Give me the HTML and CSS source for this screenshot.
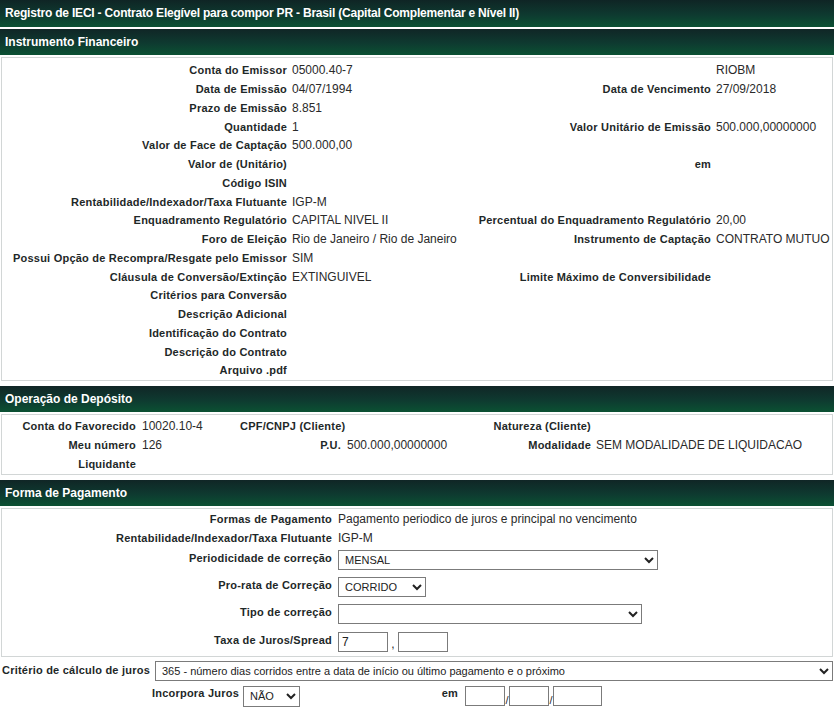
FILE: index.html
```html
<!DOCTYPE html>
<html lang="pt-BR">
<head>
<meta charset="utf-8">
<title>Registro de IECI</title>
<link rel="stylesheet" href="styles.css">
</head>
<body>
<div class="titlebar">Registro de IECI - Contrato Elegível para compor PR - Brasil (Capital Complementar e Nível II)</div>

<div class="sechead">Instrumento Financeiro</div>
<div class="box">
  <div class="grid1">
    <div class="lbl">Conta do Emissor</div><div class="val">05000.40-7</div><div class="lbl"></div><div class="val">RIOBM</div>
    <div class="lbl">Data de Emissão</div><div class="val">04/07/1994</div><div class="lbl">Data de Vencimento</div><div class="val">27/09/2018</div>
    <div class="lbl">Prazo de Emissão</div><div class="val">8.851</div><div class="lbl"></div><div class="val"></div>
    <div class="lbl">Quantidade</div><div class="val">1</div><div class="lbl">Valor Unitário de Emissão</div><div class="val">500.000,00000000</div>
    <div class="lbl">Valor de Face de Captação</div><div class="val">500.000,00</div><div class="lbl"></div><div class="val"></div>
    <div class="lbl">Valor de (Unitário)</div><div class="val"></div><div class="lbl">em</div><div class="val"></div>
    <div class="lbl">Código ISIN</div><div class="val"></div><div class="lbl"></div><div class="val"></div>
    <div class="lbl">Rentabilidade/Indexador/Taxa Flutuante</div><div class="val">IGP-M</div><div class="lbl"></div><div class="val"></div>
    <div class="lbl">Enquadramento Regulatório</div><div class="val">CAPITAL NIVEL II</div><div class="lbl">Percentual do Enquadramento Regulatório</div><div class="val">20,00</div>
    <div class="lbl">Foro de Eleição</div><div class="val">Rio de Janeiro / Rio de Janeiro</div><div class="lbl">Instrumento de Captação</div><div class="val">CONTRATO MUTUO</div>
    <div class="lbl">Possui Opção de Recompra/Resgate pelo Emissor</div><div class="val">SIM</div><div class="lbl"></div><div class="val"></div>
    <div class="lbl">Cláusula de Conversão/Extinção</div><div class="val">EXTINGUIVEL</div><div class="lbl">Limite Máximo de Conversibilidade</div><div class="val"></div>
    <div class="lbl">Critérios para Conversão</div><div class="val"></div><div class="lbl"></div><div class="val"></div>
    <div class="lbl">Descrição Adicional</div><div class="val"></div><div class="lbl"></div><div class="val"></div>
    <div class="lbl">Identificação do Contrato</div><div class="val"></div><div class="lbl"></div><div class="val"></div>
    <div class="lbl">Descrição do Contrato</div><div class="val"></div><div class="lbl"></div><div class="val"></div>
    <div class="lbl">Arquivo .pdf</div><div class="val"></div><div class="lbl"></div><div class="val"></div>
  </div>
</div>

<div class="sechead gap">Operação de Depósito</div>
<div class="box">
  <div class="grid2">
    <div class="lbl">Conta do Favorecido</div><div class="val">10020.10-4</div><div class="lbl left span2">CPF/CNPJ (Cliente)</div><div class="lbl">Natureza (Cliente)</div><div class="val v-last"></div>
    <div class="lbl">Meu número</div><div class="val">126</div><div class="lbl">P.U.</div><div class="val">500.000,00000000</div><div class="lbl">Modalidade</div><div class="val v-last">SEM MODALIDADE DE LIQUIDACAO</div>
    <div class="lbl">Liquidante</div><div class="val"></div><div class="lbl"></div><div class="val"></div><div class="lbl"></div><div class="val v-last"></div>
  </div>
</div>

<div class="sechead gap">Forma de Pagamento</div>
<div class="box box3">
  <div class="grid3">
    <div class="lbl">Formas de Pagamento</div><div class="val">Pagamento periodico de juros e principal no vencimento</div>
    <div class="lbl">Rentabilidade/Indexador/Taxa Flutuante</div><div class="val">IGP-M</div>
    <div class="lbl ctl">Periodicidade de correção</div>
    <div class="val ctl"><select class="sel w-period"><option>MENSAL</option></select></div>
    <div class="lbl ctl">Pro-rata de Correção</div>
    <div class="val ctl"><select class="sel w-prorata"><option>CORRIDO</option></select></div>
    <div class="lbl ctl">Tipo de correção</div>
    <div class="val ctl"><select class="sel w-tipo"><option></option></select></div>
    <div class="lbl ctl">Taxa de Juros/Spread</div>
    <div class="val ctl"><input class="inp w-taxa" type="text" value="7"><span class="comma">,</span><input class="inp w-taxa" type="text" value=""></div>
  </div>
</div>

<div class="criterio">
  <div class="lbl">Critério de cálculo de juros</div>
  <select class="sel w-crit"><option>365 - número dias corridos entre a data de início ou último pagamento e o próximo</option></select>
</div>

<div class="incorpora">
  <div class="lbl inc-lbl">Incorpora Juros</div>
  <select class="sel w-nao"><option>NÃO</option></select>
  <div class="lbl em-lbl">em</div>
  <input class="inp w-d1" type="text"><span class="slash">/</span><input class="inp w-d2" type="text"><span class="slash">/</span><input class="inp w-d3" type="text">
</div>
</body>
</html>
```

FILE: styles.css
```css
html, body {
  margin: 0;
  padding: 0;
  background: #ffffff;
}
body {
  width: 834px;
  font-family: "Liberation Sans", Arial, sans-serif;
  font-size: 12px;
  color: #2a2a2a;
}
.titlebar {
  height: 27px;
  line-height: 27px;
  padding-left: 5px;
  color: #ffffff;
  font-weight: bold;
  font-size: 12px;
  letter-spacing: -0.2px;
  background: linear-gradient(to bottom, #0f2525 0%, #0e3a30 55%, #0b5133 100%);
  white-space: nowrap;
  overflow: hidden;
}
.sechead {
  margin-top: 2px;
  height: 26px;
  line-height: 26px;
  padding-left: 5px;
  color: #ffffff;
  font-weight: bold;
  font-size: 12px;
  background: linear-gradient(to bottom, #102626 0%, #0e3a30 55%, #0b5133 100%);
}
.sechead.gap {
  margin-top: 5px;
}
.box {
  margin: 2px 1px 0 1px;
  border: 1px solid #d2d6d6;
}
.lbl {
  font-weight: bold;
  font-size: 11px;
  letter-spacing: 0.22px;
  color: #1e2828;
  text-align: right;
  white-space: nowrap;
}
.lbl.left {
  text-align: left;
}
.val {
  padding-left: 5px;
  color: #2a2a2a;
  white-space: nowrap;
}
.grid1 {
  display: grid;
  grid-template-columns: 285px 183px 241px 1fr;
  grid-auto-rows: 18.75px;
  align-items: center;
  padding: 3px 0 0 0;
}
.grid2 {
  display: grid;
  grid-template-columns: 134px 104px 101px 149px 101px 1fr;
  grid-auto-rows: 19px;
  align-items: center;
  padding: 2px 0 0 0;
}
.grid2 .val {
  padding-left: 6px;
}
.grid2 .val.v-last {
  padding-left: 5px;
}
.span2 {
  grid-column: span 2;
}
.grid3 {
  display: grid;
  grid-template-columns: 330px 1fr;
  grid-template-rows: 19px 18px 27px 27px 27px 28px;
  align-items: center;
  padding: 1px 0 0 0;
}
.grid3 .val {
  padding-left: 6px;
}
.grid3 .ctl.lbl {
  padding-bottom: 4px;
}
.grid3 .val.ctl {
  display: flex;
  align-items: center;
}
.sel {
  height: 20px;
  font-family: "Liberation Sans", Arial, sans-serif;
  font-size: 11px;
  color: #222;
  border: 1px solid #7b7b7b;
  border-radius: 0;
  background: #ffffff;
  padding: 0 0 0 2px;
  margin: 0;
  box-sizing: border-box;
}
.inp {
  height: 20px;
  font-family: "Liberation Sans", Arial, sans-serif;
  font-size: 12px;
  color: #222;
  border: 1px solid #7b7b7b;
  border-radius: 0;
  padding: 0 3px;
  margin: 0;
  box-sizing: border-box;
  background: #fff;
}
.w-period { width: 320px; }
.w-prorata { width: 88px; }
.w-tipo { width: 304px; }
.w-taxa { width: 50px; }
.comma {
  width: 10px;
  text-align: center;
  align-self: flex-end;
  line-height: 16px;
}
.criterio {
  display: flex;
  align-items: center;
  margin-top: 4px;
  padding-left: 2px;
  height: 20px;
}
.criterio .lbl {
  width: 147px;
  text-align: left;
  padding-bottom: 2px;
}
.w-crit {
  margin-left: 6px;
  width: 678px;
}
.incorpora {
  display: flex;
  align-items: center;
  margin-top: 5px;
  height: 21px;
}
.inc-lbl {
  width: 239px;
  padding-bottom: 6px;
}
.w-nao {
  margin-left: 4px;
  width: 57px;
  height: 21px;
}
.em-lbl {
  width: 158px;
  padding-bottom: 6px;
}
.w-d1 { margin-left: 7px; width: 40px; }
.w-d2 { width: 40px; }
.w-d3 { width: 49px; }
.slash {
  width: 4px;
  font-size: 11px;
  text-align: center;
  align-self: flex-end;
  line-height: 14px;
}
```
